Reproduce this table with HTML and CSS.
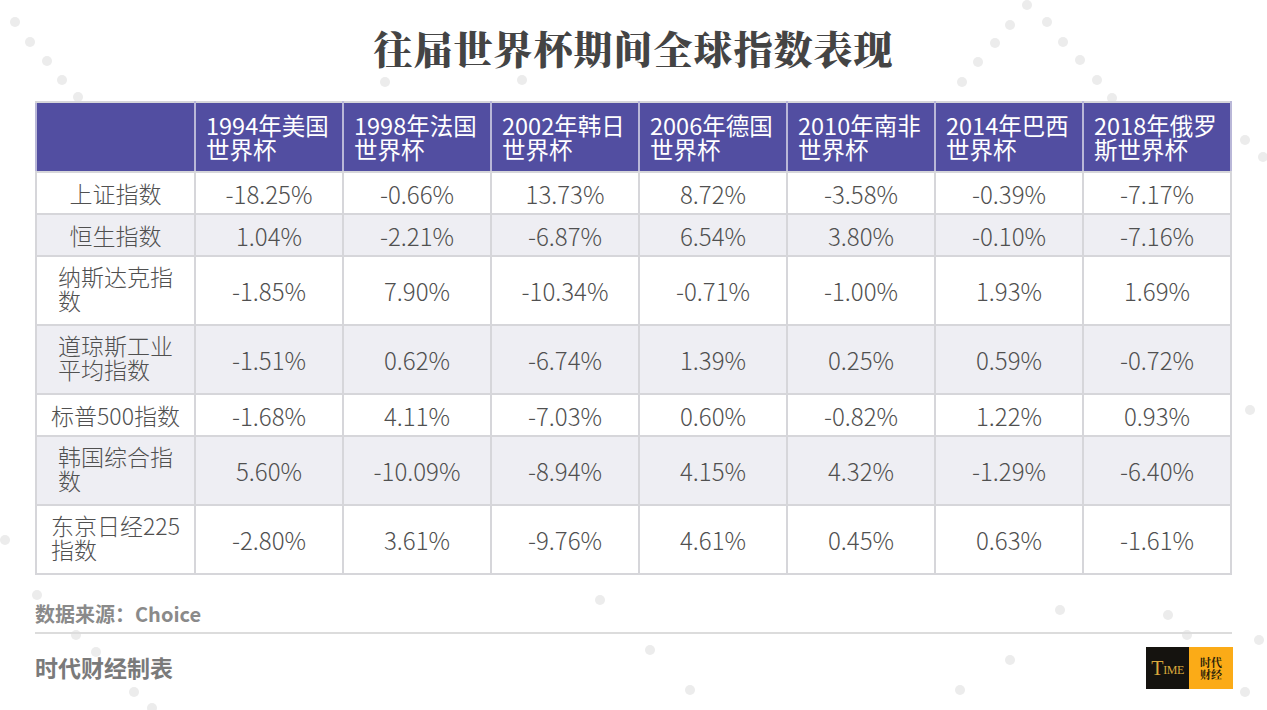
FILE: index.html
```html
<!DOCTYPE html>
<html lang="zh-CN">
<head>
<meta charset="utf-8">
<title>往届世界杯期间全球指数表现</title>
<link rel="stylesheet" href="styles.css">
</head>
<body>
<div class="page">
  <svg class="dots" width="1267" height="710" viewBox="0 0 1267 710" aria-hidden="true">
    <g fill="#ececec">
      <circle cx="15" cy="22" r="5"/><circle cx="30" cy="42" r="5"/><circle cx="47" cy="61" r="5"/>
      <circle cx="62" cy="80" r="5"/><circle cx="78" cy="97" r="5"/><circle cx="385" cy="82" r="5"/>
      <circle cx="522" cy="80" r="5"/><circle cx="1027" cy="5" r="5"/><circle cx="1010" cy="25" r="5"/>
      <circle cx="1047" cy="22" r="5"/><circle cx="995" cy="43" r="5"/><circle cx="1063" cy="42" r="5"/>
      <circle cx="978" cy="62" r="5"/><circle cx="1080" cy="60" r="5"/><circle cx="962" cy="82" r="5"/>
      <circle cx="1097" cy="80" r="5"/><circle cx="1112" cy="98" r="5"/><circle cx="1245" cy="140" r="5"/>
      <circle cx="1263" cy="157" r="5"/><circle cx="1250" cy="410" r="5"/><circle cx="37" cy="595" r="5"/>
      <circle cx="76" cy="635" r="5"/><circle cx="96" cy="652" r="5"/><circle cx="134" cy="692" r="5"/>
      <circle cx="152" cy="708" r="5"/><circle cx="600" cy="600" r="5"/><circle cx="650" cy="650" r="5"/>
      <circle cx="690" cy="690" r="5"/><circle cx="1168" cy="615" r="5"/><circle cx="1187" cy="635" r="5"/>
      <circle cx="1245" cy="692" r="5"/><circle cx="1259" cy="640" r="5"/><circle cx="960" cy="690" r="5"/>
      <circle cx="1010" cy="660" r="5"/><circle cx="1060" cy="610" r="5"/><circle cx="5" cy="540" r="5"/>
    </g>
  </svg>

  <h1 class="title">往届世界杯期间全球指数表现</h1>

  <table class="grid">
    <colgroup>
      <col class="c-first">
      <col class="c-data"><col class="c-data"><col class="c-data"><col class="c-data">
      <col class="c-data"><col class="c-data"><col class="c-data">
    </colgroup>
    <thead>
      <tr class="r-head">
        <th></th>
        <th>1994年美国<br>世界杯</th>
        <th>1998年法国<br>世界杯</th>
        <th>2002年韩日<br>世界杯</th>
        <th>2006年德国<br>世界杯</th>
        <th>2010年南非<br>世界杯</th>
        <th>2014年巴西<br>世界杯</th>
        <th>2018年俄罗<br>斯世界杯</th>
      </tr>
    </thead>
    <tbody>
      <tr class="r-short">
        <td class="name"><span class="lbl">上证指数</span></td>
        <td>-18.25%</td><td>-0.66%</td><td>13.73%</td><td>8.72%</td><td>-3.58%</td><td>-0.39%</td><td>-7.17%</td>
      </tr>
      <tr class="r-short alt">
        <td class="name"><span class="lbl">恒生指数</span></td>
        <td>1.04%</td><td>-2.21%</td><td>-6.87%</td><td>6.54%</td><td>3.80%</td><td>-0.10%</td><td>-7.16%</td>
      </tr>
      <tr class="r-tall">
        <td class="name"><span class="lbl">纳斯达克指<br>数</span></td>
        <td>-1.85%</td><td>7.90%</td><td>-10.34%</td><td>-0.71%</td><td>-1.00%</td><td>1.93%</td><td>1.69%</td>
      </tr>
      <tr class="r-tall alt">
        <td class="name"><span class="lbl">道琼斯工业<br>平均指数</span></td>
        <td>-1.51%</td><td>0.62%</td><td>-6.74%</td><td>1.39%</td><td>0.25%</td><td>0.59%</td><td>-0.72%</td>
      </tr>
      <tr class="r-short">
        <td class="name"><span class="lbl">标普500指数</span></td>
        <td>-1.68%</td><td>4.11%</td><td>-7.03%</td><td>0.60%</td><td>-0.82%</td><td>1.22%</td><td>0.93%</td>
      </tr>
      <tr class="r-tall alt">
        <td class="name"><span class="lbl">韩国综合指<br>数</span></td>
        <td>5.60%</td><td>-10.09%</td><td>-8.94%</td><td>4.15%</td><td>4.32%</td><td>-1.29%</td><td>-6.40%</td>
      </tr>
      <tr class="r-tall">
        <td class="name"><span class="lbl">东京日经225<br>指数</span></td>
        <td>-2.80%</td><td>3.61%</td><td>-9.76%</td><td>4.61%</td><td>0.45%</td><td>0.63%</td><td>-1.61%</td>
      </tr>
    </tbody>
  </table>

  <div class="source">数据来源：Choice</div>
  <div class="rule"></div>

  <div class="footer">
    <span class="maker">时代财经制表</span>
    <div class="logo">
      <div class="logo-time">T<span class="ime">IME</span></div>
      <div class="logo-cn">时代<br>财经</div>
    </div>
  </div>
</div>
</body>
</html>
```

FILE: styles.css
```css
html, body {
  margin: 0;
  padding: 0;
  background: #ffffff;
}

.page {
  position: relative;
  width: 1267px;
  height: 710px;
  overflow: hidden;
  padding: 0 35px;
  box-sizing: border-box;
  font-family: "Noto Sans CJK SC", "Noto Sans", sans-serif;
  color: #4a4a4a;
}

.dots {
  position: absolute;
  left: 0;
  top: 0;
  z-index: 0;
}

.title {
  position: relative;
  z-index: 1;
  margin: 0;
  padding-top: 22px;
  height: 80px;
  box-sizing: border-box;
  text-align: center;
  font-family: "Noto Serif CJK SC", "Noto Sans CJK SC", serif;
  font-weight: 900;
  font-size: 39px;
  line-height: 50px;
  color: #444444;
  letter-spacing: 1px;
}

.grid {
  position: relative;
  z-index: 1;
  margin-top: 21px;
  border-collapse: collapse;
  table-layout: fixed;
  width: 1197px;
  font-size: 24px;
  font-weight: 300;
  background: #ffffff;
}

.c-first { width: 159px; }
.c-data { width: 148px; }

.grid th,
.grid td {
  border: 2px solid #d6d6da;
  padding: 0;
}

.r-head {
  height: 70px;
  background: #524ea1;
}

.r-head th {
  color: #ffffff;
  font-weight: 400;
  text-align: left;
  vertical-align: middle;
  padding-left: 10px;
  line-height: 24px;
  font-size: 23.5px;
  border-color: #d6d6da #b9b7d8;
  border-top-color: #d6d6da;
  border-bottom-color: #d6d6da;
}

.grid td {
  text-align: center;
  vertical-align: middle;
  color: #505050;
}

.grid td.name {
  font-size: 23px;
}

.r-short { height: 42px; }
.r-tall { height: 69px; }
.alt { background: #eeeef3; }

.name .lbl {
  display: inline-block;
  text-align: left;
  line-height: 24px;
}

.source {
  position: relative;
  z-index: 1;
  margin-top: 26px;
  font-size: 20px;
  font-weight: 700;
  color: #8a8a8a;
  line-height: 26px;
}

.rule {
  position: relative;
  z-index: 1;
  margin-top: 5px;
  height: 2px;
  width: 1197px;
  background: #dcdcdc;
}

.footer {
  position: relative;
  z-index: 1;
  width: 1197px;
  display: flex;
  justify-content: space-between;
  align-items: flex-start;
  margin-top: 13px;
}

.maker {
  margin-top: 5px;
  font-size: 23px;
  font-weight: 700;
  color: #7a7a7a;
  line-height: 30px;
}

.logo {
  display: flex;
  height: 42px;
  margin-right: -1px;
}

.logo-time {
  width: 43px;
  background: #15130f;
  color: #d9a93c;
  display: flex;
  align-items: center;
  justify-content: center;
  font-family: "Liberation Serif", serif;
  font-size: 20px;
  line-height: 1;
}

.logo-time .ime {
  font-size: 12px;
  margin-top: 4px;
  letter-spacing: -0.5px;
}

.logo-cn {
  width: 44px;
  background: #fbab17;
  color: #2a1e0a;
  display: flex;
  align-items: center;
  justify-content: center;
  text-align: center;
  font-family: "Noto Serif CJK SC", "Noto Sans CJK SC", serif;
  font-weight: 700;
  font-size: 11px;
  line-height: 12px;
}
```
